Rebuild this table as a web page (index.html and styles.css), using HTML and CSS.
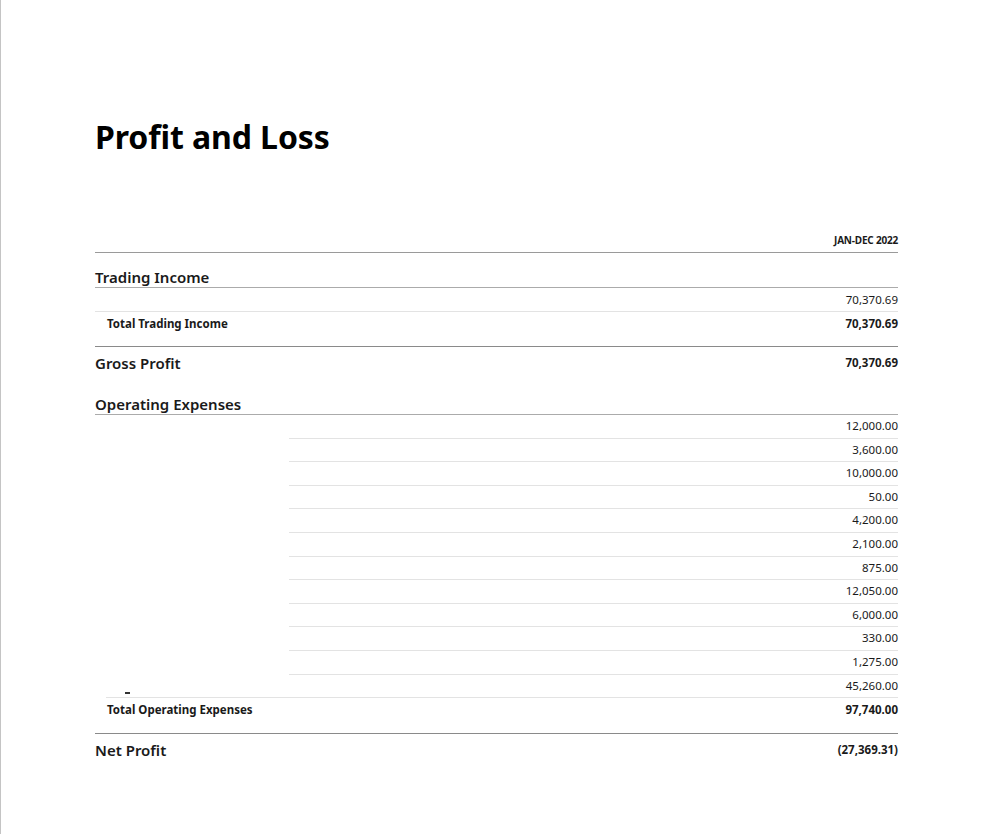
FILE: index.html
```html
<!DOCTYPE html>
<html lang="en">
<head>
<meta charset="utf-8">
<title>Profit and Loss</title>
<link rel="stylesheet" href="styles.css">
</head>
<body>
<div class="page">
  <div class="report">
    <h1 class="title">Profit and Loss</h1>

    <div class="period-row">
      <span class="period">JAN-DEC 2022</span>
    </div>

    <div class="section-head head-trading">Trading Income</div>
    <div class="row indent">
      <span class="label"></span>
      <span class="amount">70,370.69</span>
    </div>
    <div class="row total-row total-first">
      <span class="label total">Total Trading Income</span>
      <span class="amount total">70,370.69</span>
    </div>

    <div class="summary-row summary-gross">
      <span class="summary-label">Gross Profit</span>
      <span class="amount total">70,370.69</span>
    </div>

    <div class="section-head head-operating">Operating Expenses</div>
    <div class="expense-list">
      <div class="exp-row"><span class="exp-label"></span><span class="exp-cell">12,000.00</span></div>
      <div class="exp-row"><span class="exp-label"></span><span class="exp-cell">3,600.00</span></div>
      <div class="exp-row"><span class="exp-label"></span><span class="exp-cell">10,000.00</span></div>
      <div class="exp-row"><span class="exp-label"></span><span class="exp-cell">50.00</span></div>
      <div class="exp-row"><span class="exp-label"></span><span class="exp-cell">4,200.00</span></div>
      <div class="exp-row"><span class="exp-label"></span><span class="exp-cell">2,100.00</span></div>
      <div class="exp-row"><span class="exp-label"></span><span class="exp-cell">875.00</span></div>
      <div class="exp-row"><span class="exp-label"></span><span class="exp-cell">12,050.00</span></div>
      <div class="exp-row"><span class="exp-label"></span><span class="exp-cell">6,000.00</span></div>
      <div class="exp-row"><span class="exp-label"></span><span class="exp-cell">330.00</span></div>
      <div class="exp-row"><span class="exp-label"></span><span class="exp-cell">1,275.00</span></div>
      <div class="exp-row exp-last"><span class="exp-label"><span class="dash"></span></span><span class="exp-cell">45,260.00</span></div>
    </div>
    <div class="row total-row">
      <span class="label total">Total Operating Expenses</span>
      <span class="amount total">97,740.00</span>
    </div>

    <div class="summary-row summary-net">
      <span class="summary-label">Net Profit</span>
      <span class="amount total">(27,369.31)</span>
    </div>
  </div>
</div>
</body>
</html>
```

FILE: styles.css
```css
* { box-sizing: border-box; }

html, body {
  margin: 0;
  padding: 0;
  background: #ffffff;
}

body {
  font-family: "Noto Sans", "Liberation Sans", sans-serif;
  color: #1a1a1a;
}

.page {
  min-height: 834px;
  border-left: 1px solid #c4c4c4;
  padding: 117px 94px 0 94px;
}

.report {
  width: 803px;
}

.title {
  margin: 0;
  font-size: 32px;
  line-height: 40px;
  font-weight: 700;
  color: #000;
  letter-spacing: -0.1px;
}

.period-row {
  margin-top: 77px;
  height: 19px;
  border-bottom: 1px solid #9a9a9a;
  display: flex;
  justify-content: flex-end;
  align-items: flex-start;
}

.period {
  font-size: 10px;
  font-weight: 700;
  line-height: 12px;
  letter-spacing: -0.2px;
}

.section-head {
  font-size: 15px;
  font-weight: 600;
  line-height: 20px;
  border-bottom: 1px solid #ababab;
  display: flex;
  align-items: flex-end;
  padding-bottom: 0;
}

.head-trading { height: 35px; }
.head-operating { height: 34px; }

.row {
  display: flex;
  justify-content: space-between;
  align-items: center;
  height: 24px;
  padding-left: 12px;
}

.row.indent {
  border-bottom: 1px solid #e3e3e3;
}

.total-row {
  height: 23px;
  margin-bottom: 12px;
}

.total-first {
  margin-bottom: 11px;
}

.label, .amount {
  font-size: 11.5px;
  line-height: 16px;
}

.total {
  font-weight: 700;
}

.summary-row {
  display: flex;
  justify-content: space-between;
  align-items: center;
  border-top: 1px solid #8a8a8a;
  padding-bottom: 2px;
}

.summary-gross { height: 35px; }
.summary-net { height: 35px; }

.summary-label {
  font-size: 15px;
  font-weight: 600;
  line-height: 20px;
}

.expense-list {
  display: flex;
  flex-direction: column;
}

.exp-row {
  display: flex;
  height: 23.6px;
}

.exp-label {
  width: 194px;
  display: flex;
  align-items: flex-end;
  padding-left: 30px;
  padding-bottom: 3px;
}

.exp-cell {
  flex: 1;
  border-bottom: 1px solid #e3e3e3;
  text-align: right;
  font-size: 11.5px;
  line-height: 22px;
}

.exp-last {
  margin-left: 11px;
  border-bottom: 1px solid #e3e3e3;
}

.exp-last .exp-label {
  width: 183px;
  padding-left: 19px;
  padding-bottom: 3px;
}

.exp-last .exp-cell {
  border-bottom: none;
}

.dash {
  display: block;
  width: 5px;
  height: 2px;
  background: #333;
}
```
